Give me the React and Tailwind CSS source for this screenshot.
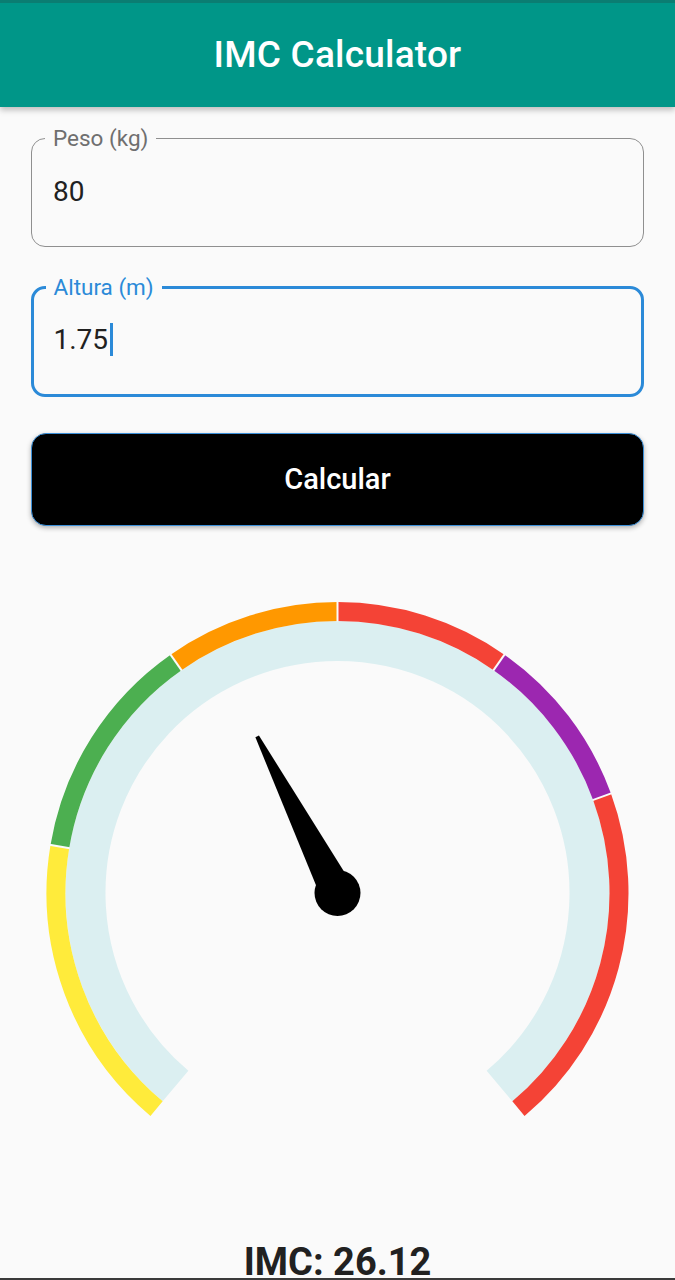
import React from "react";

const CX = 337.5;
const CY = 333;

function pt(r, deg) {
  const a = (deg * Math.PI) / 180;
  return { x: CX + r * Math.cos(a), y: CY + r * Math.sin(a) };
}

function arc(r, a1, a2) {
  const p1 = pt(r, a1);
  const p2 = pt(r, a2);
  const large = a2 - a1 > 180 ? 1 : 0;
  return `M ${p1.x} ${p1.y} A ${r} ${r} 0 ${large} 1 ${p2.x} ${p2.y}`;
}

const toAngle = (v) => 130 + (v - 10) * 7;

const ranges = [
  { from: 10, to: 18.5, color: "#ffeb3b" },
  { from: 18.5, to: 25, color: "#4caf50" },
  { from: 25, to: 30, color: "#ff9800" },
  { from: 30, to: 35, color: "#f44336" },
  { from: 35, to: 40, color: "#9c27b0" },
  { from: 40, to: 50, color: "#f44336" },
];

function Gauge({ value }) {
  const needleAngle = toAngle(value);
  const tip = pt(176, needleAngle);
  const perp = ((needleAngle + 90) * Math.PI) / 180;
  const px = Math.cos(perp);
  const py = Math.sin(perp);
  const tw = 2;
  const bw = 17;
  const needle = [
    [tip.x + px * tw, tip.y + py * tw],
    [tip.x - px * tw, tip.y - py * tw],
    [CX - px * bw, CY - py * bw],
    [CX + px * bw, CY + py * bw],
  ]
    .map((p) => p.join(","))
    .join(" ");

  return (
    <svg width="675" height="680" viewBox="0 0 675 680" className="block">
      <path d={arc(252, 130, 410)} fill="none" stroke="#dbeff1" strokeWidth="40" />
      {ranges.map((r, i) => (
        <path
          key={i}
          d={arc(281.5, toAngle(r.from), toAngle(r.to))}
          fill="none"
          stroke={r.color}
          strokeWidth="19"
        />
      ))}
      {ranges.slice(1).map((r, i) => {
        const a = toAngle(r.from);
        const p1 = pt(271.5, a);
        const p2 = pt(292, a);
        return (
          <line
            key={i}
            x1={p1.x}
            y1={p1.y}
            x2={p2.x}
            y2={p2.y}
            stroke="#fafafa"
            strokeWidth="2"
          />
        );
      })}
      <polygon points={needle} fill="#000" />
      <circle cx={CX} cy={CY} r="23" fill="#000" />
    </svg>
  );
}

export default function App() {
  return (
    <div className="min-h-screen bg-[#fafafa] font-[Roboto,sans-serif]">
      <header className="relative z-10 flex h-[107px] items-center justify-center border-t-[3px] border-[#0b7d72] bg-[#009688] shadow-[0_3px_6px_rgba(0,0,0,0.25)]">
        <h1 className="text-[37px] font-medium tracking-[0.2px] text-white">IMC Calculator</h1>
      </header>

      <main className="px-[31px] pt-[20px]">
        <fieldset className="h-[120px] rounded-[14px] border-[1.5px] border-[#8f8f8f] px-[13px]">
          <legend className="px-[8px] text-[22.5px] leading-[22px] text-[#6f6f6f]">Peso (kg)</legend>
          <div className="pl-[8px] pt-[27px] text-[28px] leading-[32px] text-[#212121]">80</div>
        </fieldset>

        <fieldset className="mt-[29px] h-[121px] rounded-[14px] border-[3px] border-[#2b8ad8] px-[11.5px]">
          <legend className="px-[8px] text-[22.5px] leading-[22px] text-[#2b8ad8]">Altura (m)</legend>
          <div className="flex items-center pl-[8px] pt-[25px] text-[28px] leading-[33px] text-[#212121]">
            <span>1.75</span>
            <span className="ml-[2px] inline-block h-[33px] w-[3px] bg-[#2b8ad8]" />
          </div>
        </fieldset>

        <button className="mt-[36px] flex h-[93px] w-full items-center justify-center rounded-[15px] border-[1.5px] border-[#3b8fd8] bg-black text-[29px] font-medium text-white shadow-[0_2px_5px_rgba(0,0,0,0.3)]">
          Calcular
        </button>
      </main>

      <div className="mt-[34px]">
        <Gauge value={26.12} />
      </div>

      <p className="text-center text-[38px] font-bold leading-[44px] text-[#212121]">IMC: 26.12</p>

      <div className="fixed bottom-0 left-0 h-[2px] w-full bg-[#3a3a3a]" />
    </div>
  );
}
